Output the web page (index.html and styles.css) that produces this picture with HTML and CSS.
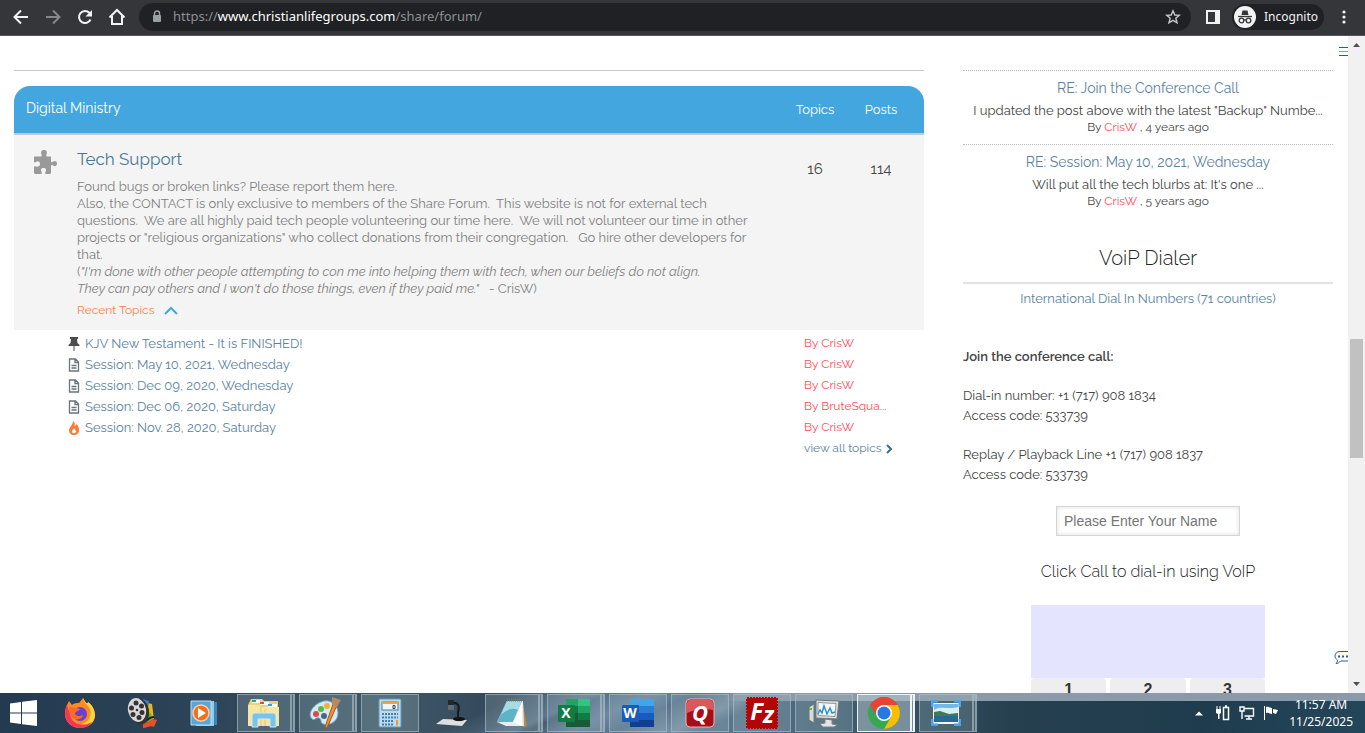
FILE: index.html
```html
<!DOCTYPE html>
<html lang="en">
<head>
    <meta charset="UTF-8">
    <meta name="viewport" content="width=device-width, initial-scale=1.0">
    <title>Share Forum</title>
    <link rel="stylesheet" href="styles.css">
</head>
<body>

    <!-- Browser toolbar -->
    <header class="toolbar">
        <nav class="nav-buttons">
            <button aria-label="Back"><svg width="16" height="16" viewBox="0 0 16 16"><path d="M15 8H2M8 1.5L1.5 8L8 14.5" fill="none" stroke="#f1f3f4" stroke-width="2"/></svg></button>
            <button aria-label="Forward"><svg width="16" height="16" viewBox="0 0 16 16"><path d="M1 8H14M8 1.5L14.500 8L8 14.5" fill="none" stroke="#85878a" stroke-width="2"/></svg></button>
            <button aria-label="Reload"><svg width="16" height="16" viewBox="0 0 16 16"><path d="M13.500 10.500A6 6 0 1 1 12.500 4L13.500 5" fill="none" stroke="#f1f3f4" stroke-width="2"/><path d="M15 1V7.500H8.500Z" fill="#f1f3f4"/></svg></button>
            <button aria-label="Home"><svg width="16" height="18" viewBox="1 0 16 18"><path d="M1.500 9.500L9 2L16.500 9.500M4 8V16H14V8" fill="none" stroke="#f1f3f4" stroke-width="2"/></svg></button>
        </nav>
        <div class="address">
            <svg width="10" height="14" viewBox="0 0 10 14"><path d="M2.500 6V3.500a2.500 2.500 0 0 1 5 0V6" fill="none" stroke="#9aa0a6" stroke-width="1.500"/><rect x="1" y="5" width="8" height="7" rx="1" fill="#9aa0a6"/></svg>
            <span class="url">https://<b>www.christianlifegroups.com</b>/share/forum/</span>
            <button aria-label="Bookmark"><svg width="16" height="16" viewBox="0 0 16 16"><path d="M8 1.800L9.800 6L14.300 6.300L10.800 9.200L12 13.800L8 11.300L4 13.800L5.200 9.200L1.700 6.300L6.200 6Z" fill="none" stroke="#c4c7cb" stroke-width="1.400"/></svg></button>
        </div>
        <button class="side-panel" aria-label="Side panel"><svg width="14" height="14" viewBox="0 0 14 14"><path d="M0 0H14V14H0ZM2 2V12H9V2Z" fill="#f1f3f4" fill-rule="evenodd"/></svg></button>
        <div class="incognito">
            <svg width="22" height="22" viewBox="0 0 22 22"><circle cx="11" cy="11" r="11" fill="#f1f3f4"/><path d="M7.500 9L8.500 4.500H13.500L14.500 9Z" fill="#35363a"/><path d="M4 10.500H18" stroke="#35363a" stroke-width="1.300"/><g fill="none" stroke="#35363a" stroke-width="1.300"><circle cx="7.500" cy="14.500" r="2.300"/><circle cx="14.500" cy="14.500" r="2.300"/><path d="M9.800 14H12.200"/></g></svg>
            <span>Incognito</span>
        </div>
        <button class="menu" aria-label="Menu"><svg width="4" height="14" viewBox="0 0 4 14" fill="#f1f3f4"><circle cx="2" cy="2" r="1.600"/><circle cx="2" cy="7" r="1.600"/><circle cx="2" cy="12" r="1.600"/></svg></button>
    </header>

    <div class="viewport">
        <div class="page">
            <main class="forum">
                <hr class="divider">
                <table class="board">
                    <thead>
                        <tr>
                            <th class="board-name" colspan="2">Digital Ministry</th>
                            <th class="count">Topics</th>
                            <th class="count last">Posts</th>
                        </tr>
                    </thead>
                    <tbody>
                        <tr>
                            <td class="board-icon"><svg width="24" height="24" viewBox="0 0 24 24"><path fill="#999" d="M1 6.500H7.500C9 6.500 9 5.500 8.500 4.500C7.500 2 8.500 0 11 0C13.500 0 14.500 2 13.500 4.500C13 5.500 13 6.500 14.500 6.500H18V11C18 12.500 19 12.500 20 11.700C22 10.300 24 11.500 24 13.500C24 16 22 17 20 15.500C19 14.700 18 15 18 16V23L17 24H13C12 24 12 23 12.500 22C14 19.500 12.500 18 10.500 18C8 18 7.500 20 8.500 22C9 23 9 24 8 24H2L1 23V17C1 16 2 16 3 16.500C5 17.500 7 16 7 14C7 11.500 5 10.500 3 12C2 12.700 1 12.500 1 11.500Z"/></svg></td>
                            <td class="board-info">
                                <h2><a href="#tech">Tech Support</a></h2>
                                <p>Found bugs or broken links? Please report them here.<br>
                                Also, the CONTACT is only exclusive to members of the Share Forum.&nbsp; This website is not for external tech<br>
                                questions.&nbsp; We are all highly paid tech people volunteering our time here.&nbsp; We will not volunteer our time in other<br>
                                projects or "religious organizations" who collect donations from their congregation.&nbsp;&nbsp; Go hire other developers for<br>
                                that.<br>
                                (<i>"I'm done with other people attempting to con me into helping them with tech, when our beliefs do not align.<br>
                                They can pay others and I won't do those things, even if they paid me."</i>&nbsp;&nbsp; - CrisW)</p>
                                <button class="recent">Recent Topics <svg width="14" height="9" viewBox="0 0 14 9"><path d="M1 8L7 2L13 8" fill="none" stroke="#43a6df" stroke-width="2"/></svg></button>
                            </td>
                            <td class="count">16</td>
                            <td class="count last">114</td>
                        </tr>
                    </tbody>
                </table>

                <ul class="topics">
                    <li>
                        <svg width="12" height="14" viewBox="0 0 12 14"><path d="M2 0H10V2H9L9.500 6L11.500 8V9H.5V8L2.500 6L3 2H2ZM5.500 9H6.500V14H5.500Z" fill="#4d4d4d"/></svg>
                        <a href="#t1">KJV New Testament - It is FINISHED!</a>
                        <a class="author" href="#crisw">By CrisW</a>
                    </li>
                    <li>
                        <svg width="12" height="14" viewBox="0 0 12 14"><path d="M1.500 1H7.500L10.500 4V13H1.500ZM7 1V4.500H10.500M3.500 7.500H8.500M3.500 10H8.500" fill="none" stroke="#6b7478" stroke-width="1.300"/></svg>
                        <a href="#t2">Session: May 10, 2021, Wednesday</a>
                        <a class="author" href="#crisw">By CrisW</a>
                    </li>
                    <li>
                        <svg width="12" height="14" viewBox="0 0 12 14"><path d="M1.500 1H7.500L10.500 4V13H1.500ZM7 1V4.500H10.500M3.500 7.500H8.500M3.500 10H8.500" fill="none" stroke="#6b7478" stroke-width="1.300"/></svg>
                        <a href="#t3">Session: Dec 09, 2020, Wednesday</a>
                        <a class="author" href="#crisw">By CrisW</a>
                    </li>
                    <li>
                        <svg width="12" height="14" viewBox="0 0 12 14"><path d="M1.500 1H7.500L10.500 4V13H1.500ZM7 1V4.500H10.500M3.500 7.500H8.500M3.500 10H8.500" fill="none" stroke="#6b7478" stroke-width="1.300"/></svg>
                        <a href="#t4">Session: Dec 06, 2020, Saturday</a>
                        <a class="author" href="#brute">By BruteSqua...</a>
                    </li>
                    <li>
                        <svg width="12" height="14" viewBox="0 0 12 14"><path fill="#ff7a33" fill-rule="evenodd" d="M5 0C7 1 7 3 6.500 5C8 5 8 4 8 3C10 4 11 6.500 11 9C11 12 9 14 6 14C3 14 1 12 1 9C1 6 5 4 5 0ZM6 7C5.500 8.500 4 9 4 10.500C4 11.800 5 12.300 6 12.300C7.300 12.300 8 11.500 8 10.300C8 9 6.500 8.500 6 7Z"/></svg>
                        <a href="#t5">Session: Nov. 28, 2020, Saturday</a>
                        <a class="author" href="#crisw">By CrisW</a>
                    </li>
                    <li>
                        <a class="view-all" href="#all">view all topics <svg width="6" height="10" viewBox="0 0 6 10"><path d="M1 1L5 5L1 9" fill="none" stroke="#3c6e8f" stroke-width="2"/></svg></a>
                    </li>
                </ul>
            </main>

            <aside class="sidebar">
                <article class="post">
                    <h3><a href="#p1">RE: Join the Conference Call</a></h3>
                    <p>I updated the post above with the latest "Backup" Numbe...</p>
                    <p class="meta">By <a class="author" href="#crisw">CrisW</a> , 4 years ago</p>
                </article>
                <article class="post">
                    <h3><a href="#p2">RE: Session: May 10, 2021, Wednesday</a></h3>
                    <p>Will put all the tech blurbs at: It's one ...</p>
                    <p class="meta">By <a class="author" href="#crisw">CrisW</a> , 5 years ago</p>
                </article>

                <h2 class="widget-title">VoiP Dialer</h2>
                <a class="numbers" href="#numbers">International Dial In Numbers (71 countries)</a>

                <div class="call-info">
                    <strong>Join the conference call:</strong>
                    <p>Dial-in number: +1 (717) 908 1834<br>Access code: 533739</p>
                    <p>Replay / Playback Line +1 (717) 908 1837<br>Access code: 533739</p>
                </div>

                <form class="dialer">
                    <input type="text" placeholder="Please Enter Your Name" aria-label="Your name">
                    <p>Click Call to dial-in using VoIP</p>
                    <div class="pad">
                        <output class="screen"></output>
                        <button type="button">1</button>
                        <button type="button">2</button>
                        <button type="button">3</button>
                    </div>
                </form>
            </aside>
        </div>

        <div class="float-tools">
            <button aria-label="Open menu"><svg width="9" height="9" viewBox="0 0 9 9"><path d="M0 0H9V1H0ZM0 8H9V9H0Z" fill="#2b58a5"/><path d="M0 4H9V5H0Z" fill="#7d9bd0"/></svg></button>
            <button aria-label="Chat"><svg width="14" height="14" viewBox="0 0 14 14"><path d="M15 1.500H6C3 1.500 1 3.500 1 6C1 8 2 9 3.500 10C3.500 11.500 3 12.500 2 13.500C4 13.500 5.500 12.500 6.500 11H15" fill="none" stroke="#2b58a5"/><path d="M4 5.500h2v2H4zM8 5.500h2v2H8zM12 5.500h2v2h-2z" fill="#2b58a5"/></svg></button>
        </div>

        <div class="scrollbar">
            <svg width="7" height="4" viewBox="0 0 7 4"><path d="M0 4L3.500 0L7 4Z" fill="#505050"/></svg>
            <div class="thumb"></div>
            <svg width="7" height="4" viewBox="0 0 7 4"><path d="M0 0H7L3.500 4Z" fill="#505050"/></svg>
        </div>
    </div>

    <!-- Windows taskbar -->
    <footer class="taskbar">
        <button class="start" aria-label="Start"><svg width="27" height="26" viewBox="0 0 27 26"><path d="M0 3.500L11 2V12.500H0ZM12 1.800L27 0V12.500H12ZM0 13.500H11V24L0 22.500ZM12 13.500H27V26L12 24.200Z" fill="#fff"/></svg></button>

        <button class="task" aria-label="Firefox"><svg width="32" height="32" viewBox="0 0 32 32"><path d="M3 8L5 4L8 8C10 6 13 6 15 6L19 1L22 6C24 8 24 6 24 5C28 8 31 13 31 18C31 26 24 31 16 31C8 31 1 25 1 17C1 13 2 10 3 8Z" fill="#ff8a24"/><path d="M19 1C19 5 24 8 26 12C28 18 25 26 17 27C24 31 31 25 31 18C31 13 28 8 24 5C24 7 22 7 19 1Z" fill="#ffd43a"/><path d="M1 17C1 25 8 31 16 31C21 31 25 29 28 25C20 30 7 28 6 17L3 8C2 10 1 13 1 17Z" fill="#f5365c"/><circle cx="16" cy="17" r="7" fill="#6b3fd0"/><path d="M5 10C9 10 12 11 16 12C14 15 11 14 11 17C13 20 17 19 19 18C18 24 8 24 6 17Z" fill="#ff6a2a"/></svg></button>

        <button class="task" aria-label="Movie Maker"><svg width="32" height="32" viewBox="0 0 32 32"><path d="M18 5L26 7L28 22L18 26Z" fill="#e8b822"/><path d="M17 2L23 4L22 12L17 12Z" fill="#3e78c8"/><path d="M18 18L25 16L26 24L18 26Z" fill="#5eb52c"/><path d="M17 27C22 26 25 21 31 23L28 30C25 28 21 31 17 31Z" fill="#e8502c"/><path d="M14 25C20 28 20 20 28 20" fill="none" stroke="#222" stroke-width="2"/><ellipse cx="13" cy="14" rx="10" ry="13" transform="rotate(-12 13 14)" fill="#333"/><ellipse cx="11" cy="13" rx="9" ry="12" transform="rotate(-12 11 13)" fill="#d8d8d8"/><g fill="#333"><circle cx="10" cy="6" r="2.500"/><circle cx="15.500" cy="9" r="2.500"/><circle cx="5.500" cy="11" r="2.500"/><circle cx="16" cy="15.500" r="2.500"/><circle cx="7" cy="17.500" r="2.500"/><circle cx="13" cy="20.500" r="2.500"/><circle cx="11" cy="13" r="1.300"/></g></svg></button>

        <button class="task" aria-label="Media Player"><svg width="28" height="28" viewBox="0 0 28 28"><path d="M9 3H27V26H9Z" fill="#3d83b8"/><path d="M6 2H24V27H6Z" fill="#8fcaea"/><path d="M1 2H21V26H1Z" fill="#5aa6d8" stroke="#b7dff2"/><circle cx="11" cy="14" r="8" fill="#f36f1e" stroke="#ffd0a4" stroke-width="1.500"/><path d="M8 9L16 14L8 19Z" fill="#fff"/></svg></button>

        <button class="task open stacked" aria-label="File Explorer"><svg width="34" height="32" viewBox="0 0 34 32"><path d="M1 8L4 2H15L17 4H31V27H1Z" fill="#ead27c"/><path d="M5 3H13V6H5Z" fill="#fff"/><path d="M5 3h4v2H5z" fill="#34a853"/><path d="M13 5H22V8H13Z" fill="#fff"/><path d="M13 5h4v2h-4z" fill="#dd4b39"/><path d="M21 7H30V10H21Z" fill="#fff"/><path d="M21 7h4v2h-4z" fill="#2f9be8"/><path d="M1 8H12L14 10H32V29H1Z" fill="#f5e6a2"/><path d="M14 10V29M18 12V29" stroke="#e4c96c"/><path d="M5 30V19Q5 16 8 16H26Q29 16 29 19V30H23V22H11V30Z" fill="#7bc3e6" stroke="#c9ecfa"/></svg></button>

        <button class="task open stacked" aria-label="Paint"><svg width="34" height="32" viewBox="0 0 34 32"><path d="M12 5C20 1 29 7 29 16C29 25 20 29 14 27C11 26 13 22 10 21C7 20 6 24 3 22C-2 17 4 8 12 5Z" fill="#d5e9f6" stroke="#6ea6ca"/><circle cx="7" cy="17" r="3" fill="#e04842"/><circle cx="12" cy="12" r="3" fill="#57b947"/><circle cx="18" cy="9" r="3" fill="#f4b32d"/><circle cx="15" cy="19" r="3" fill="#456783"/><path d="M28 8L18 31L16 30L24 7Z" fill="#ef8e2e" stroke="#a95a18"/><path d="M23 0L32 3L28 10L23 8Z" fill="#b68a61"/></svg></button>

        <button class="task open" aria-label="Calculator"><svg width="24" height="30" viewBox="0 0 24 30"><rect x="1" y="1" width="22" height="28" rx="1" fill="#b9dcf2" stroke="#6199bf"/><rect x="4" y="4" width="16" height="8" fill="#eef8fa" stroke="#557b93"/><path d="M4 4H20V6H4Z" fill="#f3a33a"/><path d="M15 7.500H17V10.500H15Z" fill="none" stroke="#345"/><path d="M4 16H20M4 19.500H20M4 23H16M4 26.500H16" stroke="#4c7ea5" stroke-width="2" stroke-dasharray="2 1"/><path d="M18 22H20V27.500H18Z" fill="#f39a27"/></svg></button>

        <button class="task" aria-label="Document camera"><svg width="34" height="30" viewBox="0 0 34 30"><path d="M8 21L32 22L27 28L1 26Z" fill="#dedede"/><ellipse cx="24" cy="21" rx="6" ry="2" fill="#111"/><path d="M17 6C23 3 25 9 23 14V21" fill="none" stroke="#161a1d" stroke-width="2"/><rect x="13" y="2" width="6" height="9" fill="#23282c"/><path d="M13 7H19V12H13Z" fill="#626b70"/></svg></button>

        <button class="task open stacked" aria-label="Notepad"><svg width="32" height="30" viewBox="0 0 32 30"><path d="M27 5L31 28L27 29L23 7Z" fill="#ba884d"/><path d="M11 3H27L28 28H10L1 24Z" fill="#e3eff1"/><path d="M11 3H26L17 24H1Z" fill="#5eb4c7"/><path d="M11 3H26L22 12C16 9 10 12 5 17Z" fill="#a7dce5"/><path d="M26 4L17 24L26 28Z" fill="#fff"/><path d="M11 2H27" stroke="#777" stroke-width="3" stroke-dasharray="1 1"/></svg></button>

        <button class="task open stacked" aria-label="Excel"><svg width="34" height="30" viewBox="0 0 34 30"><path d="M9 1H21V8H9Z" fill="#21a366"/><path d="M21 1H33V8H21Z" fill="#33c481"/><path d="M9 8H21V15H9Z" fill="#107c41"/><path d="M21 8H33V15H21Z" fill="#21a366"/><path d="M9 15H33V29H9Z" fill="#185c37"/><path d="M21 15H33V22H21Z" fill="#107c41"/><rect x="1" y="7" width="17" height="17" rx="1" fill="#107c41"/><text class="office-letter" x="9" y="20">X</text></svg></button>

        <button class="task open" aria-label="Word"><svg width="34" height="30" viewBox="0 0 34 30"><path d="M9 1H33V8H9Z" fill="#41a5ee"/><path d="M9 8H33V15H9Z" fill="#2b7cd3"/><path d="M9 15H33V22H9Z" fill="#185abd"/><path d="M9 22H33V29H9Z" fill="#103f91"/><rect x="1" y="7" width="17" height="17" rx="1" fill="#185abd"/><text class="office-letter" x="9" y="20">W</text></svg></button>

        <button class="task open" aria-label="Quicken"><svg width="30" height="30" viewBox="0 0 30 30"><rect x="1" y="1" width="28" height="28" rx="4" fill="#a80c16" stroke="#e6b5b5"/><path d="M2 5Q2 2 5 2H25Q28 2 28 5V12Q15 9 2 15Z" fill="#d8585c"/><text class="quicken-letter" x="15" y="23">Q</text></svg></button>

        <button class="task open" aria-label="FileZilla"><svg width="32" height="32" viewBox="0 0 32 32"><rect x="1" y="1" width="30" height="30" fill="#b50404" stroke="#b50404" stroke-width="2" stroke-dasharray="2 1"/><text class="fz-letter" x="16" y="23">F<tspan dy="3">z</tspan></text></svg></button>

        <button class="task open" aria-label="Performance monitor"><svg width="32" height="30" viewBox="0 0 32 30"><path d="M1 9L6 6V25L1 22Z" fill="#d8dbd9" stroke="#6e7576"/><path d="M1 11H4" stroke="#52c234" stroke-width="2"/><path d="M17 21L24 22V26L29 27L26 29L15 29L12 26L17 25Z" fill="#e4e5e3" stroke="#7c8182"/><path d="M8 2L31 3L29 21L8 20Z" fill="#dcdfdd" stroke="#6e7576"/><path d="M10 4.500L28 5.500L27 18.500L10 17.500Z" fill="#f2f9fd" stroke="#8c9a9e"/><path d="M10 16L12 12L14 15L16 8L19 16L22 10L24 15L27 14" fill="none" stroke="#338ed0" stroke-width="1.500"/></svg></button>

        <button class="task open active stacked" aria-label="Chrome"><svg width="32" height="32" viewBox="0 0 32 32"><circle cx="16" cy="16" r="16" fill="#34a853"/><path d="M16 8H29.800A16 16 0 0 1 16 32L23 20Z" fill="#fbbc04"/><path d="M2.200 8A16 16 0 0 1 29.800 8H16A8 8 0 0 0 9 12L9.100 20Z" fill="#ea4335"/><circle cx="16" cy="16" r="8" fill="#fff"/><circle cx="16" cy="16" r="6.500" fill="#2578e5"/></svg></button>

        <button class="task open stacked" aria-label="Photos"><svg width="30" height="26" viewBox="0 0 30 26"><rect x="2" y="3" width="26" height="21" fill="#eef6fa"/><path d="M3 4H27V13H3Z" fill="#71b8e8"/><path d="M3 10C9 5 18 10 27 7V14H3Z" fill="#d8edf5"/><path d="M3 12L9 11L18 14L27 13V16H3Z" fill="#3e7b4d"/><path d="M3 16H27V22H3Z" fill="#286b91"/><path d="M1 7V1H7M23 1H29V7M29 19V25H23M7 25H1V19" fill="none" stroke="#4da2ea" stroke-width="3"/></svg></button>

        <div class="tray">
            <svg width="8" height="5" viewBox="0 0 8 5"><path d="M0 4.500L4 .5L8 4.500Z" fill="#fff"/></svg>
            <svg class="first" width="16" height="16" viewBox="0 0 16 16"><path d="M8.500 2.500H13.500V14.500H8.500ZM10 1H12" fill="none" stroke="#fff" stroke-width="1.500"/><path d="M1 4H6V8L4.500 9V14H3V9L1 8ZM1.500 1H2.500V4H1.500ZM4.500 1H5.500V4H4.500Z" fill="#fff"/></svg>
            <svg width="16" height="16" viewBox="0 0 16 16"><path d="M5 3.500H14.500V11H5.500M10 11V14M7 14H13M1 2H5V6H1ZM3 6V14" fill="none" stroke="#fff" stroke-width="1.400"/></svg>
            <svg width="16" height="16" viewBox="0 0 16 16"><path d="M1 1H2V15H1ZM3 2C6 1 7 3 9 3V9C7 9 6 7 3 8ZM10 4L15 5L13 9L10 8Z" fill="#fff"/></svg>
            <time class="clock" datetime="2025-11-25T11:57">11:57 AM<br>11/25/2025</time>
        </div>
    </footer>

</body>
</html>
```
FILE: styles.css
```css
* {
    box-sizing: border-box;
}
body {
    margin: 0;
    height: 100vh;
    display: flex;
    flex-direction: column;
    overflow: hidden;
    font-family: Raleway, "Open Sans", sans-serif;
    font-size: 13px;
    line-height: 17px;
    color: #444;
    background-color: #fff;
}
h2, h3, p, ul {
    margin: 0;
    padding: 0;
    font-weight: 400;
}
a {
    color: #5a83a0;
    text-decoration: none;
}
button {
    padding: 0;
    border: 0;
    background: none;
    font: inherit;
    color: inherit;
}
svg {
    display: block;
    flex: none;
}

/* Browser toolbar */
.toolbar {
    flex: none;
    display: flex;
    align-items: center;
    height: 36px;
    padding: 0 19px 2px 13px;
    background-color: #35363a;
    border-bottom: 1px solid #55565a;
    font-family: "Noto Sans", sans-serif;
    color: #f1f3f4;
}
.nav-buttons {
    display: flex;
    align-items: center;
    gap: 16px;
    margin-right: 14px;
}
.address {
    flex: 1;
    display: flex;
    align-items: center;
    gap: 11px;
    height: 28px;
    padding: 0 10px 0 13px;
    border-radius: 14px;
    background-color: #202124;
}
.url {
    flex: 1;
    color: #8d9094;
}
.url b {
    font-weight: 400;
    color: #fff;
}
.side-panel {
    margin: 0 12px 0 15px;
}
.incognito {
    display: flex;
    align-items: center;
    gap: 8px;
    width: 92px;
    height: 26px;
    padding-left: 2px;
    margin-right: 18px;
    border-radius: 13px;
    background-color: #202124;
    font-size: 12px;
}

/* Page */
.viewport {
    flex: 1;
    min-height: 0;
    display: flex;
    position: relative;
    overflow: hidden;
}
.page {
    flex: 1;
    display: grid;
    grid-template-columns: 910fr 370fr;
    gap: 39px;
    padding: 34px 15px 0 14px;
}
.divider {
    margin: 0 0 15px;
    border: 0;
    border-top: 1px solid #c8c8c8;
}
.board {
    width: 100%;
    border-collapse: separate;
    border-spacing: 0;
}
.board th {
    height: 49px;
    padding: 0;
    background-color: #43a6df;
    border-bottom: 2px solid #c5c9cc;
    color: #fff;
    font-weight: 400;
}
.board .board-name {
    padding: 0 0 3px 12px;
    border-top-left-radius: 16px;
    text-align: left;
    font-size: 14px;
}
.board th.last {
    border-top-right-radius: 16px;
}
.board td {
    padding: 14px 0 11px;
    background-color: #f4f4f4;
    vertical-align: top;
}
.board .board-icon {
    width: 63px;
    padding: 15px 0 0 19px;
}
.board .count {
    width: 66px;
    text-align: center;
}
.board .last {
    width: 76px;
    padding-right: 10px;
}
.board td.count {
    padding-top: 26px;
    font-size: 15px;
}
.board-info h2 {
    margin-bottom: 8px;
    font-size: 17px;
    line-height: 21px;
}
.board-info h2 a {
    color: #4a7896;
}
.board-info p {
    color: #808080;
    white-space: nowrap;
}
.recent {
    display: flex;
    align-items: center;
    gap: 10px;
    margin-top: 5px;
    font-size: 12px;
    color: #ff7f50;
}
.topics {
    padding: 3px 0 0 54px;
    list-style: none;
}
.topics li {
    display: grid;
    grid-template-columns: 12px 1fr 120px;
    column-gap: 5px;
    align-items: center;
    height: 21px;
}
.author {
    font-size: 12px;
    color: #ff4d57;
}
.view-all {
    grid-column: 3;
    display: flex;
    align-items: center;
    gap: 4px;
    font-size: 12px;
}

/* Sidebar */
.sidebar {
    text-align: center;
}
.post {
    height: 74px;
    padding-top: 9px;
    border-top: 1px dotted #bbb;
}
.post h3 {
    margin-bottom: 5px;
    font-size: 14px;
}
.post .meta {
    font-size: 12px;
}
.widget-title {
    margin: 27px 0 6px;
    padding-bottom: 11px;
    border-bottom: 2px solid #e2e2e2;
    font-size: 20px;
    font-weight: 300;
    line-height: 26px;
    color: #222;
}
.numbers {
    display: block;
}
.call-info {
    margin-top: 40px;
    line-height: 20px;
    text-align: left;
}
.call-info strong {
    font-weight: 600;
}
.call-info p {
    margin-top: 19px;
}
.dialer {
    display: flex;
    flex-direction: column;
    align-items: center;
    margin-top: 21px;
}
.dialer input {
    width: 184px;
    height: 30px;
    padding: 0 7px;
    border: 1px solid #d5d5d5;
    box-shadow: inset 0 0 4px #ddd;
    font: 14px "Liberation Sans", sans-serif;
}
.dialer input::placeholder {
    color: #757575;
}
.dialer p {
    margin: 25px 0 23px;
    font-size: 16px;
    font-weight: 300;
    line-height: 21px;
    color: #222;
}
.pad {
    display: grid;
    grid-template-columns: repeat(3, 1fr);
    column-gap: 4px;
    width: 234px;
}
.screen {
    grid-column: 1 / -1;
    height: 73px;
    background-color: #e4e4ff;
}
.pad button {
    height: 30px;
    padding-bottom: 6px;
    border-radius: 4px;
    background-color: #eee;
    font: bold 16px "Liberation Sans", sans-serif;
    color: #333;
}

/* Buttons that float over the right edge of the page */
.float-tools {
    position: absolute;
    top: 11px;
    right: 17px;
    bottom: 29px;
    display: flex;
    flex-direction: column;
    justify-content: space-between;
    align-items: flex-end;
}
.scrollbar {
    flex: none;
    display: flex;
    flex-direction: column;
    align-items: center;
    width: 17px;
    padding: 7px 0;
    background-color: #f1f1f1;
}
.thumb {
    width: 13px;
    height: 119px;
    margin: auto;
    margin-top: 292px;
    background-color: #c1c1c1;
}

/* Taskbar */
.taskbar {
    flex: none;
    display: flex;
    align-items: center;
    gap: 4px;
    height: 40px;
    background-image:
        linear-gradient(90deg, transparent 53%, #8b9aaa 54%),
        linear-gradient(155deg, transparent 36%, #7f9bb866 41%, transparent 42%, #8ba5c266 45%, transparent 48%, #a5b9cc66 52%, transparent 54%),
        linear-gradient(90deg, #243a50, #2d4358 15%, #3f5a68 28%, #34495c 36%, #58738d 44%, #58758d 54%, #3a586a 64%, #26404f 74%, #1f3c4e 88%, #24465a);
    background-size: 100% 8px, 100% 100%, 100% 100%;
    background-repeat: no-repeat;
}
.start {
    display: grid;
    place-items: center;
    width: 47px;
    height: 40px;
}
.task {
    display: grid;
    place-items: center;
    width: 58px;
    height: 38px;
}
.open {
    border: 1px solid #b4c2ca99;
    background-color: #9eb6bd40;
}
.stacked {
    border-right-width: 5px;
    border-right-style: double;
}
.active {
    border-color: #edf3f6;
    background-color: #bbcbd180;
}
.office-letter, .quicken-letter, .fz-letter {
    fill: #fff;
    font-family: "Open Sans", sans-serif;
    font-weight: 700;
    font-size: 14px;
    text-anchor: middle;
}
.quicken-letter {
    font-size: 22px;
    font-style: italic;
}
.fz-letter {
    font-size: 24px;
    font-style: italic;
}
.tray {
    display: flex;
    align-items: center;
    gap: 8px;
    margin-left: auto;
    padding-right: 12px;
    font-family: "Noto Sans", sans-serif;
    font-size: 12px;
    color: #fff;
}
.tray .first {
    margin-left: 4px;
}
.clock {
    margin-left: 2px;
    text-align: center;
}
```
